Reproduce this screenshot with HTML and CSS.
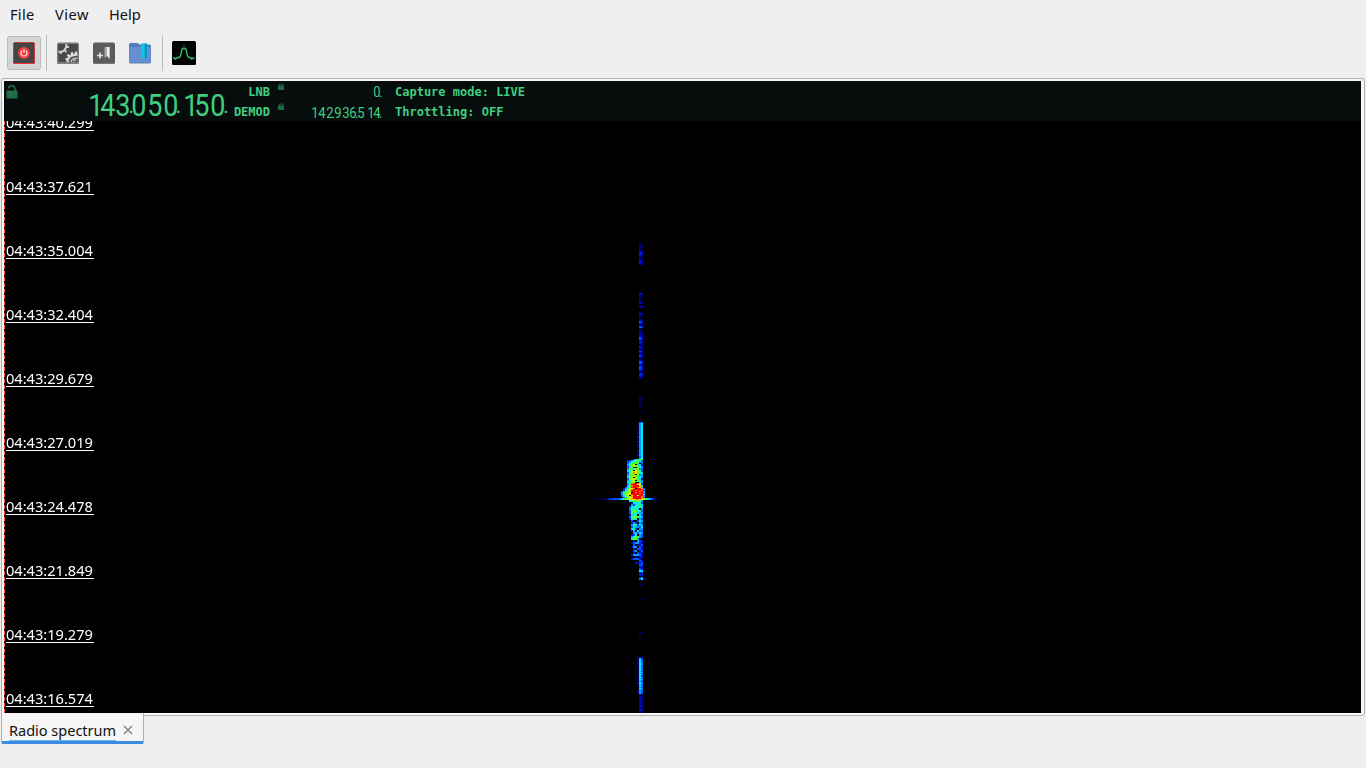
FILE: index.html
```html
<!doctype html>
<html>
<head>
<meta charset="utf-8">
<title>Radio spectrum</title>
<link rel="stylesheet" href="styles.css">
</head>

<body>
<div class="menubar">
    <span class="m-file">File</span>
    <span class="m-view">View</span>
    <span class="m-help">Help</span>
</div>

<div class="toolbar">
    <div class="tool active">
        <svg width="24" height="24" viewBox="0 0 24 24">
            <rect x="1.5" y="1.5" width="21" height="21" rx="1" fill="#444" stroke="#c93b3b"/>
            <path d="M1.5 22.5h21" stroke="#e33"/>
            <circle cx="12" cy="12" r="6" fill="#f33b3b"/>
            <path d="M10 9.8a3 3 0 1 0 4 0M12 8v4" fill="none" stroke="#ffe0dc" stroke-width="1.3"/>
        </svg>
    </div>
    <div class="sep"></div>
    <div class="tool">
        <svg width="24" height="24" viewBox="0 0 24 24">
            <rect x="1" y="1.5" width="22" height="21.5" rx="2" fill="#777"/>
            <rect x="2.5" y="3" width="19" height="18" fill="#484848"/>
            <path d="M2.5 10.5c5 1 8-2 8-7.5" fill="none" stroke="#d0d0d0" stroke-width="2"/>
            <path d="M5 11v2M9 9.5l1.5 1.5M10.5 6h2.5" stroke="#d0d0d0" stroke-width="1.8"/>
            <path d="M11.5 21c0-5 3-7.5 10-7.5" fill="none" stroke="#d8d8d8" stroke-width="2.4"/>
            <path d="M9.5 18h2.5M11.5 13.5l2 2M16 11v3M20 10.5v3" stroke="#d8d8d8" stroke-width="2.2"/>
            <path d="M15 21c0-2.5 2.5-4 6.5-4M17 20l3-1.5" fill="none" stroke="#bbb" stroke-width="1.5"/>
            <rect x="1" y="21" width="22" height="2" rx="1" fill="#808080"/>
        </svg>
    </div>
    <div class="tool">
        <svg width="24" height="24" viewBox="0 0 24 24">
            <rect x="1" y="1.5" width="22" height="21.5" rx="2" fill="#5c5c5c"/>
            <path d="M1.5 22.5h21" stroke="#777"/>
            <path d="M5 14.5h6M8 11.5v6" stroke="#e4e4e4" stroke-width="1.6"/>
            <path d="M12.5 6h5v11.5l-2.5-2.5-2.5 2z" fill="#a8a8a8"/>
            <path d="M15 6h2.5v11.5l-2.5-2.5z" fill="#f0f0f0"/>
        </svg>
    </div>
    <div class="tool">
        <svg width="24" height="24" viewBox="0 0 24 24">
            <path d="M1 3.5a1.5 1.5 0 0 1 1.5-1.5h7l2 1.5h10a1.5 1.5 0 0 1 1.5 1.5v15.5a2 2 0 0 1-2 2h-18a2 2 0 0 1-2-2z" fill="#5579bd"/>
            <path d="M1.5 6h21v13.5a2 2 0 0 1-2 2h-17a2 2 0 0 1-2-2z" fill="#668fd3"/>
            <path d="M13 2.5h6v16l-3-3-3 3z" fill="#08c8ea"/>
            <path d="M16.5 2.5h2.5v16l-2.5-2.5z" fill="#0798c0"/>
            <path d="M2 22.5h20" stroke="#b5b9c2"/>
        </svg>
    </div>
    <div class="sep"></div>
    <div class="tool">
        <svg width="24" height="24" viewBox="0 0 24 24">
            <rect width="24" height="24" rx="1.5" fill="#020404"/>
            <path d="M1 17h1.5l1 1 2-1.5h1.5c2.5-1 2-7.5 3.500-9h3c1.500 1.500 1 8 3.500 9h1.500l1 1.500 1.500-1 1.500.5" fill="none" stroke="#36b66f" stroke-width="1.5"/>
            <path d="M12 3v4" stroke="#185a36"/>
        </svg>
    </div>
</div>

<div class="pane">
    <div class="lcd">
        <div class="lock">
            <svg width="12" height="14" viewBox="0 0 12 14">
                <path d="M2.5 3.5a3.3 3.3 0 0 1 6.5 0V6" fill="none" stroke="#1d6a40" stroke-width="1.6"/>
                <rect x=".5" y="5.5" width="11" height="8" fill="#1f7044"/>
            </svg>
        </div>
        <div class="freq big"><b class="one">1</b><b>4</b><b>3</b><i>.</i><b>0</b><b>5</b><b>0</b><i>.</i><b class="one">1</b><b>5</b><b>0</b><i>.</i></div>
        <div class="labels">
            <div>LNB</div>
            <div>DEMOD</div>
        </div>
        <div class="locks">
            <svg width="6" height="7" viewBox="0 0 6 7"><path d="M1.5 3V1h3v2" fill="none" stroke="#1d5a38"/><rect y="2.5" width="6" height="4.5" fill="#1f6a42"/></svg>
            <svg width="6" height="7" viewBox="0 0 6 7"><path d="M1.5 3V1h3v2" fill="none" stroke="#1d5a38"/><rect y="2.5" width="6" height="4.5" fill="#1f6a42"/></svg>
        </div>
        <div class="subfreq">
            <div class="freq"><b>0</b><i>.</i></div>
            <div class="freq"><b class="one">1</b><b>4</b><b>2</b><i>.</i><b>9</b><b>3</b><b>6</b><i>.</i><b>5</b><b class="one">1</b><b>4</b><i>.</i></div>
        </div>
        <div class="state">
            <div>Capture mode: LIVE</div>
            <div>Throttling: OFF</div>
        </div>
    </div>
    <div class="waterfall">
        <canvas id="waterfall" width="1357" height="592"></canvas>
        <div class="times">
            <div><span>04:43:40.299</span></div>
            <div><span>04:43:37.621</span></div>
            <div><span>04:43:35.004</span></div>
            <div><span>04:43:32.404</span></div>
            <div><span>04:43:29.679</span></div>
            <div><span>04:43:27.019</span></div>
            <div><span>04:43:24.478</span></div>
            <div><span>04:43:21.849</span></div>
            <div><span>04:43:19.279</span></div>
            <div><span>04:43:16.574</span></div>
        </div>
    </div>
</div>

<div class="tab">
    <span class="tab-name">Radio spectrum</span>
    <svg width="10" height="10" viewBox="0 0 10 10"><path d="M1 1l8 8M9 1l-8 8" stroke="#777" stroke-width="1.1"/></svg>
</div>
<script src="waterfall.js"></script>
</body>
</html>
```
FILE: styles.css
```css
body { margin: 0; width: 1366px; height: 768px; overflow: hidden; background: #efefef; color: #111; font-family: "Noto Sans", "Open Sans", sans-serif; font-size: 14.6px; }
svg, canvas { display: block; }

.menubar { display: flex; height: 30px; padding-left: 10px; line-height: 29px; }
.m-file { width: 45px; letter-spacing: .3px; }
.m-view { width: 54px; letter-spacing: .5px; }

.toolbar { display: flex; align-items: center; height: 46px; padding: 0 0 2px 7px; }
.tool { display: flex; align-items: center; justify-content: center; box-sizing: border-box; width: 34px; height: 34px; margin-right: 2px; }
.tool.active { background: #d3d5d4; border: 1px solid #b9bbba; border-radius: 3px; margin-right: 5px; }
.sep { width: 1px; height: 36px; margin-right: 4px; background: #bcbcbc; }
.sep ~ .sep { margin-left: 3px; }

.pane { box-sizing: border-box; width: 1364px; height: 638px; margin: 0 0 0 1px; padding: 2px; border: 1px solid #b0b0b0; border-radius: 3px; background: #f7f7f7; }

.lcd { display: flex; width: 1357px; height: 40px; background: #070d0d; color: #40cf80; font: bold 12px/20px "DejaVu Sans Mono", monospace; white-space: nowrap; }
.lock { width: 79px; padding: 4px 0 0 2px; box-sizing: border-box; }
.freq { display: flex; justify-content: flex-end; font-family: Roboto, "Liberation Sans", sans-serif; font-size: 15.5px; line-height: 21px; }
.freq b { display: flex; justify-content: center; width: 7.9px; font-weight: 400; transform: scaleX(.84); }
.freq b.one { position: relative; left: 1.5px; }
.freq i { width: 0; font-style: normal; font-weight: 400; text-indent: -2.5px; }
.freq.big { width: 143px; font-size: 31px; line-height: 49px; }
.freq.big b { width: 15.8px; transform: scaleX(.87); }
.freq.big b.one { left: 4px; }
.freq.big i { text-indent: -3px; font-size: 22px; }
.labels { width: 44px; text-align: right; padding-top: 1px; }
.locks { padding: 2px 0 0 8px; width: 6px; }
.locks svg { margin-bottom: 13px; }
.subfreq { width: 97px; padding-top: 1px; }
.state { padding: 1px 0 0 14px; }

.waterfall { position: relative; width: 1357px; height: 592px; overflow: hidden; background: #000; }
.waterfall::before { content: ""; position: absolute; left: 0; top: 0; width: 1px; height: 592px; background: repeating-linear-gradient(#ff5050 0 4px, #000 4px 6px); }
#waterfall { position: absolute; left: 0; top: 0; }
.times { position: relative; margin-top: -9px; padding-left: 2px; color: #fff; font-size: 14.6px; }
.times div { height: 64px; }
.times span { display: block; width: 88px; height: 18px; line-height: 21px; border-bottom: 1px solid #fff; white-space: nowrap; }

.tab { position: relative; display: flex; align-items: center; box-sizing: border-box; width: 143px; height: 31px; margin: -3px 0 0 1px; padding-left: 7px; border-left: 1px solid #b0b0b0; border-right: 1px solid #b0b0b0; border-bottom: 3px solid #3b8be3; border-radius: 0 0 2px 2px; background: #f5f5f5; }
.tab-name { width: 107px; height: 27px; line-height: 34px; border-bottom: 1px solid #69b5e8; font-size: 14.5px; white-space: nowrap; }
.tab svg { margin: 5px 0 0 7px; }
```
FILE: waterfall.js
```js
var ctx = document.querySelector('#waterfall').getContext('2d'),
    palette = {
        1: '#000030', 2: '#000080', 3: '#0010c8', 4: '#0050ff', 5: '#009cff', 6: '#00e4ff',
        7: '#20f890', 8: '#68ff20', 9: '#c0ff00', a: '#ffe000', b: '#ff8000', c: '#ff0000'
    };

// each bin is 2px wide, h is the height of a line
function draw(x, y, h, lines) {
    lines.split(' ').forEach(function (line, row) {
        for (var i = 0; i < line.length; i++) {
            if (palette[line[i]]) {
                ctx.fillStyle = palette[line[i]];
                ctx.fillRect(x - 4 + i * 2, y - 121 + row * h, 2, h);
            }
        }
    });
}

// faint echoes
draw(645, 130, 1, '1');
draw(639, 243, 1, '2 2 2 22 22 2 2 2 32 33 33 33 32 22 2 2 32 32 33 32 32 22');
draw(639, 273, 1, '1');
draw(639, 293, 1, '32 32 2 2 2 2 2 2 2 32 32 . 2 32 22 . . . . 2 33 32 2 2 2 . 22 22 43 43 32 22 22 43 44 2 2 2 22 22 22 32 32 32 43 43 43 32 22 43 22 22 22 32 32 32 22 22 43 32 32 22 43 42 22 21 21 32 43 44 43 22 32 43 43 43 43 32 22 22 33 43 33 33 2 2 11');
draw(639, 397, 1, '2 21 2 2 2 1 1 2 2 2 . . . . 1 2');

// head of the trail
draw(637, 420, 1, '.1 .2 .45 256 256 .56 .56 256 256 .56 356 .56 256 356 .56 .56 256 356 .56 256 .56 356 256 .56 256 356 .56 256 .56 .56 356 .56 256 .56 256 356 .46 256 .56');

// main echo
draw(627, 459, 1, '...46788 34578874 44678665');
draw(627, 462, 1, '46788754 467887.4 5789.663 57898763 46898765 468..765 58778854 58778854 679.a874 6799a874 479ba876 479ba876 5888.855 58888855 689a8765 689.8765 48998762 48998762 5789.874 67898765 6789..65 57bccb94 58ccc994 58bccca5');
draw(623, 486, 1, '.368bcccb9 .468cccb95 3579ab.cca4 4689bccccc5');
draw(621, 490, 1, '.3689ccbccb4 46899ccccbc5 57899.cbccc5 5789accccbc5 5789acccccc6 4689.acc9cc5 46899bccccb5 .46899ccccb4');
draw(593, 498, 1, '....1..333444468899bccccba765432 1111222344444567899aabba98765432');

// tail
draw(627, 500, 2, '.6788875 ..366674 ..546776 .4677676 .57766.5 .4788674 .4877655 .3667.64 .4788765 .3776.54 ..4..465 ..354.54 ..576465 ..465546 ..674.55 ..35.644 ...56465 ..346.54 ..578754 ..7885 ...3.543 ..345533 ...4.334 ..355.43 ...3.443 ...45.34 ...3.433 ..355543 ....3.33 ..34443 ......43 ....3334 ......44 ......33 ......43 ......66');
draw(639, 572, 1, '34 33 33 33 . 35 56 463 . . . . 12 12');
draw(639, 589, 1, '1');
draw(639, 599, 1, '12');
draw(639, 624, 1, '1 . . . . . . 1 2 2 1 . . . 1 1');

// lower echo
draw(637, 657, 1, '232 254 264 264 264 264 265 265 264 264 265 264 265 264 .64 .65 264 265 263 264 265 264 265 264 254 264 265 264 255 264 .54 .65 .54 254 254 254 254 132 . .22 .22 .32 .32 .22 .33 .32 .22 .22 .32 .32 .22 .22 .32 .33 .22 .22');
```
